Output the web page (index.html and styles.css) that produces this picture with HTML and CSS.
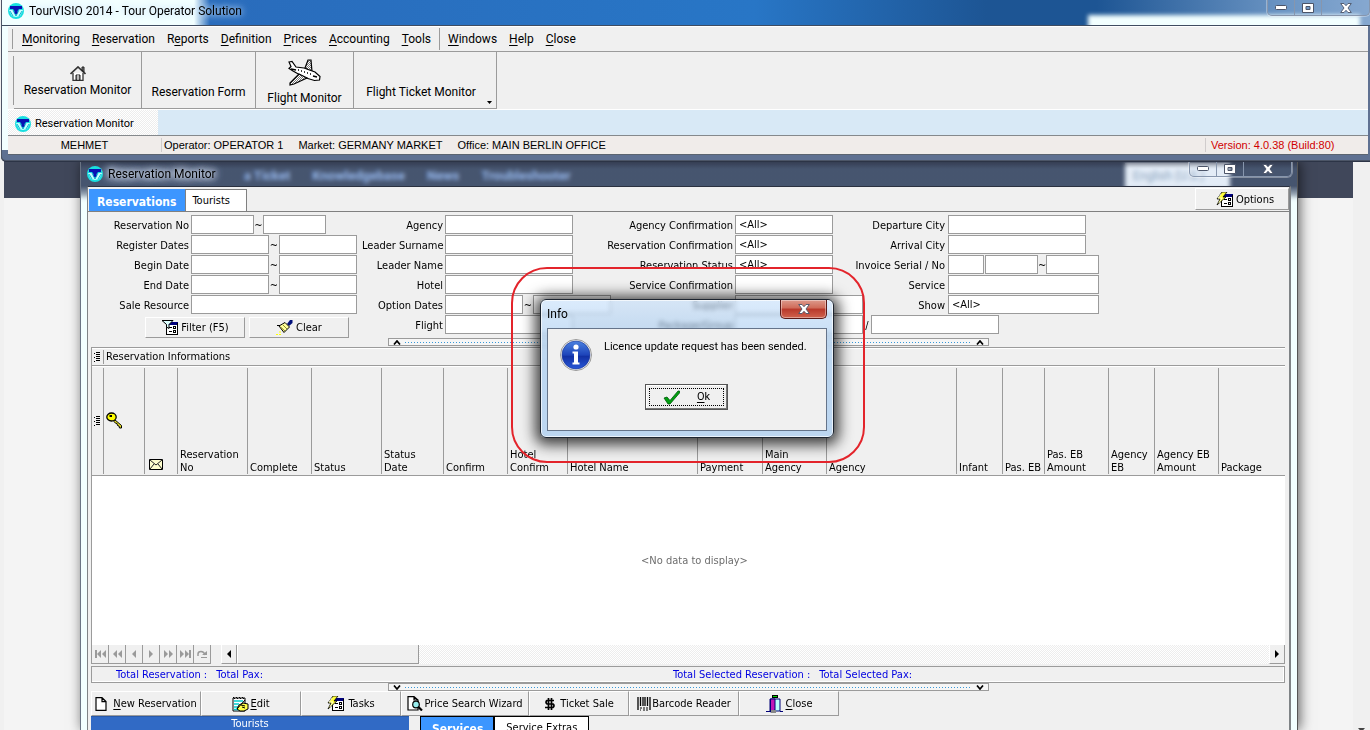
FILE: index.html
```html
<!DOCTYPE html>
<html lang="en">
<head>
<meta charset="utf-8">
<title>TourVISIO 2014 - Tour Operator Solution</title>
<link rel="stylesheet" href="styles.css">
</head>
<body>
<svg class="defs" width="0" height="0" aria-hidden="true">
  <defs>
    <symbol id="i-app" viewBox="0 0 16 16">
      <circle cx="8" cy="8" r="8" fill="#19dfe0"/>
      <path d="M1 7h4l3 6 3-6h4l-3 6-4 1-4-1z" fill="#c8ffff"/>
      <path d="M2 8l3 5M14 8l-3 5M5 7l3 6 3-6" stroke="#10b8d0" fill="none"/>
      <path d="M2 3h12v3h-3L9.500 8v2L8 11.500 6.500 10V8L5 6H2z" fill="#0a12b4"/>
    </symbol>
    <symbol id="i-form" viewBox="0 0 17 15">
      <g shape-rendering="crispEdges">
        <path d="M6 3h10v11H6z" fill="#fff" stroke="none"/>
        <path d="M5 2h12v3H5z" fill="#00007b"/>
        <path d="M5 3h1v12H5zM16 3h1v12h-1zM5 14h12v1H5zM8 7h3v1H8zM8 11h3v1H8zM12 6h3v3h-3zM12 10h3v3h-3z" fill="#000"/>
        <path d="M13 7h1v1h-1zM13 11h1v1h-1z" fill="#fff"/>
      </g>
    </symbol>
    <symbol id="i-task" viewBox="0 0 17 15">
      <use href="#i-form" width="17" height="15"/>
      <path d="M6 0h5L7 5h3L1 13l3-6H1z" fill="#ffff3c" stroke="#000" stroke-width=".8"/>
      <path d="M5 2L2 6h4L3 11" stroke="#fff" fill="none" stroke-width=".7"/>
    </symbol>
    <symbol id="i-min" viewBox="0 0 12 6"><rect x=".5" y=".5" width="11" height="4" rx="1" fill="#fff" stroke="#4b5468"/></symbol>
    <symbol id="i-max" viewBox="0 0 12 10"><path d="M.5.5h11v9H.5zM4 3.500v3h4v-3z" fill="#fff" fill-rule="evenodd" stroke="#4b5468"/></symbol>
    <symbol id="i-x" viewBox="0 0 12 10"><path d="M.7.5h3.300L6 2.700 8 .5h3.300L8 5l3.300 4.500H8L6 7.300 4 9.500H.7L4 5z" fill="#fff" stroke="#4b5468" stroke-width=".9"/></symbol>
    <symbol id="i-list" viewBox="0 0 7 10"><path d="M0 1h1M0 5h1M0 9h1M2 .5h4M2 2.500h4M2 4.500h4M2 6.500h4M2 8.500h4" stroke="#000" shape-rendering="crispEdges"/></symbol>
    <symbol id="i-up" viewBox="0 0 8 5"><path d="M1 4.500L4 1l3 3.500" fill="none" stroke="#000" stroke-width="1.700"/></symbol>
    <symbol id="i-down" viewBox="0 0 8 5"><path d="M1 .5L4 4 7 .5" fill="none" stroke="#000" stroke-width="1.700"/></symbol>
  </defs>
</svg>

<div class="desktop">
  <div class="site">
    <nav class="site-nav">
      <a href="#">a Ticket</a><a href="#">Knowledgebase</a><a href="#">News</a><a href="#">Troubleshooter</a>
      <span class="site-lang">English (U.S.)</span>
    </nav>
    <div class="site-scroll"><svg width="7" height="4" viewBox="0 0 7 4"><path d="M0 0h7L3.500 4z" fill="#444"/></svg></div>
  </div>

  <section class="child">
    <header class="child-title">
      <svg width="16" height="16"><use href="#i-app"/></svg><h2>Reservation Monitor</h2>
      <div class="caption">
        <button aria-label="Minimize"><svg width="12" height="6"><use href="#i-min"/></svg></button><button aria-label="Maximize"><svg width="12" height="10"><use href="#i-max"/></svg></button><button class="wide" aria-label="Close"><svg width="12" height="10"><use href="#i-x"/></svg></button>
      </div>
    </header>
    <div class="client">
      <div class="tabbar">
        <button class="tab active">Reservations</button><button class="tab">Tourists</button>
        <button class="flat options"><svg width="17" height="15"><use href="#i-task"/></svg>Options</button>
      </div>

      <form class="filters" onsubmit="return false">
        <div class="group g1">
          <div class="row"><label for="rno">Reservation No</label><input id="rno" class="w63"><span class="sep">~</span><input class="w63" aria-label="Reservation No to"></div>
          <div class="row"><label for="reg">Register Dates</label><input id="reg" class="w78"><span class="sep wide">~</span><input class="w78" aria-label="Register date to"></div>
          <div class="row"><label for="beg">Begin Date</label><input id="beg" class="w78"><span class="sep wide">~</span><input class="w78" aria-label="Begin date to"></div>
          <div class="row"><label for="end">End Date</label><input id="end" class="w78"><span class="sep wide">~</span><input class="w78" aria-label="End date to"></div>
          <div class="row"><label for="src">Sale Resource</label><input id="src" class="w166"></div>
          <div class="actions">
            <button class="flat"><svg width="17" height="15" viewBox="0 0 17 15"><use href="#i-form" width="17" height="15"/><path d="M1 .5h11L8 4.500v4L5.500 7V4.500z" fill="#dff" stroke="#000"/></svg>Filter (F5)</button>
            <button class="flat"><svg width="17" height="15" viewBox="0 0 17 15"><path d="M11 4l3-4h2.500v3L13 6z" fill="#00107b"/><path d="M3 6l6-3.500L13.500 7 8 12.500z" fill="#ffff9c" stroke="#000"/><path d="M4.500 7L9 11M7 5l4 4" stroke="#8a8a20" fill="none"/><path d="M1 5.500h3" stroke="#000"/><path d="M0 14.500h6M3 12h2" stroke="#ff0" stroke-dasharray="2 1"/></svg>Clear</button>
          </div>
        </div>
        <div class="group g2">
          <div class="row"><label for="agy">Agency</label><input id="agy" class="w128"></div>
          <div class="row"><label for="lsn">Leader Surname</label><input id="lsn" class="w128"></div>
          <div class="row"><label for="ln">Leader Name</label><input id="ln" class="w128"></div>
          <div class="row"><label for="htl">Hotel</label><input id="htl" class="w128"></div>
          <div class="row"><label for="opt">Option Dates</label><input id="opt" class="w78"><span class="sep wide">~</span><input class="w78" aria-label="Option date to"></div>
          <div class="row"><label for="flt">Flight</label><input id="flt" class="w128"></div>
        </div>
        <div class="group g3">
          <div class="row"><label for="ac">Agency Confirmation</label><select id="ac" class="w98"><option>&lt;All&gt;</option></select></div>
          <div class="row"><label for="rc">Reservation Confirmation</label><select id="rc" class="w98"><option>&lt;All&gt;</option></select></div>
          <div class="row"><label for="rs">Reservation Status</label><select id="rs" class="w98"><option>&lt;All&gt;</option></select></div>
          <div class="row"><label for="sc">Service Confirmation</label><input id="sc" class="w98"></div>
          <div class="row"><label for="sup">Supplier</label><input id="sup" class="w128"></div>
          <div class="row"><label for="pkg">Package/Group</label><input id="pkg" class="w128"><span class="sep tight">/</span><input class="w128" aria-label="Group"></div>
        </div>
        <div class="group g4">
          <div class="row"><label for="dc">Departure City</label><input id="dc" class="w138"></div>
          <div class="row"><label for="arc">Arrival City</label><input id="arc" class="w138"></div>
          <div class="row"><label for="inv">Invoice Serial / No</label><input id="inv" class="w36"><input class="w53 gap" aria-label="Invoice no from"><span class="sep tight">~</span><input class="w53" aria-label="Invoice no to"></div>
          <div class="row"><label for="svc">Service</label><input id="svc" class="w151"></div>
          <div class="row"><label for="shw">Show</label><select id="shw" class="w151"><option>&lt;All&gt;</option></select></div>
        </div>
      </form>

      <div class="splitter"><svg width="8" height="5"><use href="#i-up"/></svg><i></i><svg width="8" height="5"><use href="#i-up"/></svg></div>

      <div class="grid">
        <div class="band"><span class="handle"><svg width="7" height="10"><use href="#i-list"/></svg></span>Reservation Informations</div>
        <table>
          <colgroup><col class="c12"><col class="c41"><col class="c33"><col class="c70"><col class="c64"><col class="c70"><col class="c62"><col class="c64"><col class="c60"><col class="c130"><col class="c65"><col class="c64"><col class="c130"><col class="c46"><col class="c42"><col class="c64"><col class="c46"><col class="c64"><col></colgroup>
          <thead><tr>
            <th class="mid"><svg width="7" height="10"><use href="#i-list"/></svg></th>
            <th class="mid"><svg width="17" height="17" viewBox="0 0 17 17"><path d="M8.500 7.500l7 6v2.500h-2l-.5-2-1.500-.5-.5-2-1.500-.3L8 9.500z" fill="#e8e020" stroke="#000"/><ellipse cx="5.500" cy="5" rx="4.700" ry="4" fill="#ff0" stroke="#000" stroke-width="1.300"/><path d="M3.500 3h2.500v2H3.500z" fill="#000"/></svg></th>
            <th><svg width="14" height="11" viewBox="0 0 14 11"><path d="M.5.5h13v10H.5z" fill="#ffffce" stroke="#000"/><path d="M1 1l6 5 6-5M1 10l4-5M13 10L9 5" fill="none" stroke="#222"/></svg></th>
            <th>Reservation<br>No</th><th>Complete</th><th>Status</th><th>Status<br>Date</th><th>Confirm</th><th>Hotel<br>Confirm</th><th>Hotel Name</th><th>Payment</th><th>Main<br>Agency</th><th>Agency</th><th>Infant</th><th>Pas. EB</th><th>Pas. EB<br>Amount</th><th>Agency<br>EB</th><th>Agency EB<br>Amount</th><th>Package</th>
          </tr></thead>
        </table>
        <div class="empty">&lt;No data to display&gt;</div>
        <div class="navrow">
          <div class="pager">
            <button aria-label="First"><svg width="11" height="8" viewBox="0 0 11 8"><path d="M0 0h2v8H0zM6 0v8L2 4zM11 0v8L7 4z"/></svg></button><button aria-label="Previous page"><svg width="9" height="8" viewBox="0 0 9 8"><path d="M4 0v8L0 4zM9 0v8L5 4z"/></svg></button><button aria-label="Previous"><svg width="4" height="8" viewBox="0 0 4 8"><path d="M4 0v8L0 4z"/></svg></button><button aria-label="Next"><svg width="4" height="8" viewBox="0 0 4 8"><path d="M0 0v8l4-4z"/></svg></button><button aria-label="Next page"><svg width="9" height="8" viewBox="0 0 9 8"><path d="M0 0v8l4-4zM5 0v8l4-4z"/></svg></button><button aria-label="Last"><svg width="11" height="8" viewBox="0 0 11 8"><path d="M0 0v8l4-4zM5 0v8l4-4zM9 0h2v8H9z"/></svg></button><button aria-label="Refresh"><svg width="10" height="8" viewBox="0 0 10 8"><path d="M1 6V4q0-2.500 3-2.500T8 5" fill="none" stroke="#9a9a9a" stroke-width="1.500"/><path d="M5 5h5V1zM4 7h6v1H4z"/></svg></button>
          </div>
          <div class="hscroll"><button class="arrow" aria-label="Scroll left"><svg width="4" height="8" viewBox="0 0 4 8"><path d="M4 0v8L0 4z"/></svg></button><div class="thumb"></div><button class="arrow end" aria-label="Scroll right"><svg width="4" height="8" viewBox="0 0 4 8"><path d="M0 0v8l4-4z"/></svg></button></div>
        </div>
      </div>

      <div class="totals"><span>Total Reservation :</span><span>Total Pax:</span><span class="sel">Total Selected Reservation :</span><span>Total Selected Pax:</span></div>
      <div class="splitter low"><svg width="8" height="5"><use href="#i-down"/></svg><i></i><svg width="8" height="5"><use href="#i-down"/></svg></div>

      <div class="commands">
        <button class="flat b110 new"><svg width="12" height="14" viewBox="0 0 12 14"><path d="M1 .7h6L11 4.500v8.800H1zM7 .7v4h4" fill="#fff" stroke="#000" stroke-width="1.200"/></svg><span><u>N</u>ew Reservation</span></button>
        <button class="flat b100"><svg width="17" height="16" viewBox="0 0 17 16"><path d="M1 2h12v13H1z" fill="#fff" stroke="#000"/><path d="M2 5h9M2 8h5M2 11h4M2 13.500h6" stroke="#0cc" stroke-width="1.500"/><path d="M1 1l2 2M4 1l2 2M7 1l2 2M10 1l2 2" stroke="#000"/><path d="M5 13l2-4 4-2 5 1v5l-4 2H8z" fill="#ffff4a" stroke="#000"/><path d="M5 13L13 4M9 9l4 1M10 11l3 1" stroke="#000"/></svg><span><u>E</u>dit</span></button>
        <button class="flat b100"><svg width="17" height="15"><use href="#i-task"/></svg>&nbsp;Tasks</button>
        <button class="flat b128"><svg width="16" height="15" viewBox="0 0 16 15"><path d="M1 .7h6L11 4v10H1zM7 .7V4h4" fill="#fff" stroke="#000" stroke-width="1.200"/><circle cx="9" cy="8.500" r="3.300" fill="#9ee" stroke="#000" stroke-width="1.200"/><path d="M11.500 11l3.500 3.500" stroke="#000" stroke-width="2.200"/></svg>Price Search Wizard</button>
        <button class="flat b100"><svg width="12" height="12" viewBox="0 0 12 12"><path d="M10 2.500H3q-2 1.500 0 3.500h6q2 1.500 0 3.500H1M4.500 0v12M7.500 0v12" fill="none" stroke="#000" stroke-width="1.700"/></svg>&nbsp;Ticket Sale</button>
        <button class="flat b110"><svg width="14" height="14" viewBox="0 0 14 14"><path d="M1 0v13M13 0v13M3.500 0v9M6 0v9M8 0v9M10.500 0v9" stroke="#000" stroke-width="1.300"/><path d="M3 11h2M6 11h2M9 11h2M3 13h1M6 13h2M9 13h2" stroke="#000"/></svg>Barcode Reader</button>
        <button class="flat b100 exit"><svg width="17" height="18" viewBox="0 0 17 18"><path d="M6 0h6v3H6z" fill="#000"/><path d="M7 1h4v1H7z" fill="#0d0"/><path d="M4 4h10v12H4z" fill="#bff" stroke="#007"/><path d="M4.500 4H9v11l-4.500 2z" fill="#c018b8" stroke="#007"/><path d="M0 16.500h4M14 16.500h3" stroke="#007"/><path d="M5 15h5v3H5z" fill="#888"/></svg><span><u>C</u>lose</span></button>
      </div>

      <div class="lower">
        <div class="tourists">Tourists</div>
        <div class="subtabs"><button class="tab active">Services</button><button class="tab">Service Extras</button></div>
      </div>
    </div>
  </section>

  <section class="main">
    <header class="main-title">
      <svg width="16" height="16"><use href="#i-app"/></svg><h1>TourVISIO 2014 - Tour Operator Solution</h1>
      <div class="caption">
        <button aria-label="Minimize"><svg width="12" height="6"><use href="#i-min"/></svg></button><button aria-label="Maximize"><svg width="12" height="10"><use href="#i-max"/></svg></button><button class="wide" aria-label="Close"><svg width="12" height="10"><use href="#i-x"/></svg></button>
      </div>
    </header>
    <div class="main-client">
      <nav class="menu">
        <button><u>M</u>onitoring</button><button><u>R</u>eservation</button><button>R<u>e</u>ports</button><button><u>D</u>efinition</button><button><u>P</u>rices</button><button><u>A</u>ccounting</button><button><u>T</u>ools</button><i></i><button><u>W</u>indows</button><button><u>H</u>elp</button><button><u>C</u>lose</button>
      </nav>
      <div class="toolbar">
        <button class="t128"><svg width="16" height="15" viewBox="0 0 16 15"><path d="M3 7v7.500h10V7" fill="#fff" stroke="#333" stroke-width="1.300"/><path d="M.5 8L8 1l7.500 7" fill="none" stroke="#333" stroke-width="1.700"/><path d="M12 1h2v5l-2-2zM6 9h4v5H6z" fill="#777" stroke="#222"/><path d="M7.500 9h1v5h-1z" fill="#fff"/></svg><span>Reservation Monitor</span></button>
        <button class="t114 low"><span>Reservation Form</span></button>
        <button class="t98 plane"><svg width="33" height="27" viewBox="0 0 33 27"><defs><pattern id="dots" width="2" height="2" patternUnits="userSpaceOnUse"><path d="M0 0h2v2H0z" fill="#fff"/><path d="M0 0h1v1H0zM1 1h1v1H1z" fill="#777"/></pattern></defs><path d="M17 9l3-8h3l1 12z" fill="url(#dots)" stroke="#000" stroke-width="1.200"/><path d="M1 3l3-.5L8 8l8 1 11 4 5 4.500-.5 3.500-5 .5-10-3L5 12 1 9.500l2-2z" fill="#fff" stroke="#000" stroke-width="1.200"/><path d="M11 15l8 4L6 25l-4 1v-2z" fill="url(#dots)" stroke="#000" stroke-width="1.200"/><path d="M10 11h1M13 12h1M16 13h1M19 14h1M22 15h1M25 17l4 1M3 10l5 1" stroke="#000" stroke-width="1.500"/></svg><span>Flight Monitor</span></button>
        <button class="t143 low"><span>Flight Ticket Monitor</span><svg class="more" width="5" height="3" viewBox="0 0 5 3"><path d="M0 0h5L2.500 3z"/></svg></button>
      </div>
      <div class="wintabs"><button><svg width="16" height="16"><use href="#i-app"/></svg>Reservation Monitor</button></div>
      <footer class="status"><span class="user">MEHMET</span><span>Operator: OPERATOR 1</span><span>Market: GERMANY MARKET</span><span>Office: MAIN BERLIN OFFICE</span><span class="version">Version: 4.0.38 (Build:80)</span></footer>
    </div>
  </section>

  <div class="callout"></div>

  <section class="dialog" role="dialog" aria-labelledby="dlg-title">
    <header><h2 id="dlg-title">Info</h2><button class="close" aria-label="Close"><svg width="12" height="10"><use href="#i-x"/></svg></button></header>
    <div class="dialog-body">
      <div class="message">
        <svg width="32" height="32" viewBox="0 0 32 32"><defs><linearGradient id="ball" x1="0" y1="0" x2="0" y2="1"><stop offset="0" stop-color="#4b82e0"/><stop offset=".5" stop-color="#1d44ba"/><stop offset=".55" stop-color="#1231a4"/><stop offset="1" stop-color="#2a58d8"/></linearGradient></defs><circle cx="16" cy="16" r="15.500" fill="#f4f4f4" stroke="#999"/><circle cx="16" cy="16" r="14" fill="url(#ball)" stroke="#1a3494" stroke-width=".6"/><circle cx="16" cy="8" r="2.600" fill="#fff"/><path d="M12.500 12.500h5.500v11h1.500V25.500h-7V23.500H14v-9h-1.500z" fill="#fff"/></svg>
        <p>Licence update request has been sended.</p>
      </div>
      <button class="ok"><svg width="17" height="15" viewBox="0 0 17 15"><path d="M1 8l3-1 3 3.500L15 1h1.500v2L7 14H5z" fill="#00a010" stroke="#005a0a" stroke-width=".8"/></svg><span><u>O</u>k</span></button>
    </div>
  </section>
</div>
</body>
</html>
```
FILE: styles.css
```css
:root {
  --face: #f0f0f0;
  --line: #9b9b9b;
  --tahoma: "DejaVu Sans Condensed", "DejaVu Sans", sans-serif;
  --segoe: Roboto, "Noto Sans", sans-serif;
  --system: Roboto, "Liberation Sans", sans-serif;
}
* { box-sizing: border-box; }
html, body { height: 100%; }
body { margin: 0; overflow: hidden; background: #f0f0f0; color: #000; font: 11px/13px var(--tahoma); }
button, input, select { margin: 0; padding: 0; border: 0; background: none; color: inherit; font: inherit; border-radius: 0; }
button { white-space: nowrap; }
h1, h2, p { margin: 0; font: inherit; }
svg { display: block; flex: none; }
u { text-underline-offset: 2px; }
.defs { position: absolute; }
.desktop { position: relative; height: 100vh; overflow: hidden; }

/* web page lying behind the windows */
.site { position: absolute; inset: 161px 0 0 4px; padding-right: 17px; background: #f0f0f0; }
.site::after { content: ""; display: block; height: 100%; background: #f4f4f4; }
.site-nav { display: flex; align-items: center; gap: 22px; height: 37px; padding: 0 123px 7px 240px; background: #40475a; font: bold 13px/16px var(--system); }
.site-nav a { color: #9fbcec; text-decoration: none; }
.site-lang { margin-left: auto; width: 105px; height: 26px; padding: 5px 8px; background: #fff; color: #9ab; font-weight: normal; font-size: 12px; }
.site-scroll { position: absolute; right: 5px; bottom: -2px; }

/* caption buttons */
.caption { display: flex; align-self: flex-start; margin-left: auto; border: 1px solid #8796ad; border-top: 0; border-radius: 0 0 5px 5px; box-shadow: 0 0 0 1px #ffffff55; }
.caption button { display: flex; align-items: center; justify-content: center; width: 27px; height: 15px; border-right: 1px solid #8796ad; }
.caption .wide { width: 47px; border-right: 0; }

/* reservation window */
.child { position: absolute; inset: 161px 72px 0 80px; padding: 0 6px; display: flex; flex-direction: column; border-left: 1px solid #6a7484; border-right: 1px solid #555; background: linear-gradient(#1f2a4066, #6496d22e 8px, #6496d22e 25px, #f2ffff 42px); backdrop-filter: blur(2px); box-shadow: 2px 0 12px #0009; }
.child-title { display: flex; align-items: center; height: 25px; color: #000; font: 12px/16px var(--segoe); }
.child-title h2 { margin-left: 5px; text-shadow: 0 0 5px #dde6f4, 0 0 8px #dde6f4, 0 0 10px #b8c6dc, 0 0 12px #b8c6dc; }
.child-title .caption { margin-right: -1px; }
.client { flex: 1; min-height: 0; display: flex; flex-direction: column; overflow: hidden; background: var(--face); border: 2px solid #7f8386; border-top: 1px solid #2b3140; border-bottom: 0; border-left-width: 1px; }
.tabbar { display: flex; align-items: flex-end; height: 25px; padding-left: 1px; border-bottom: 1px solid #808080; }
.tab { height: 22px; padding: 0 6px; border: 1px solid #808080; border-bottom: 0; background: #fff; }
.tab.active { padding: 4px 8px 0 7px; border-color: #3c96ff; background: #3c96ff; color: #fff; font-weight: bold; font-size: 12px; }
.tabbar .tab:nth-child(2) { padding-right: 16px; }
.flat { display: flex; align-items: center; justify-content: center; gap: 3px; border: 1px solid var(--line); border-top-color: #fff; border-left-color: #fff; background: var(--face); }
.options { width: 94px; height: 22px; margin: 0 0 1px auto; padding-left: 6px; }

.filters { display: flex; padding-top: 3px; }
.group { flex: none; }
.row { display: flex; align-items: flex-start; height: 20px; line-height: 21px; }
.row label { flex: none; padding-right: 2px; text-align: right; white-space: nowrap; }
.row input, .row select { flex: none; height: 19px; border: 1px solid var(--line); background: #fff; }
.row select { appearance: none; padding-left: 3px; line-height: 17px; }
.g1 { width: 274px; } .g1 label { width: 103px; }
.g2 { width: 208px; } .g2 label { width: 83px; }
.g3 { width: 250px; } .g3 label { width: 165px; }
.g4 label { width: 128px; padding-right: 3px; }
.sep { flex: none; width: 9px; text-align: center; }
.sep.wide { width: 10px; }
.sep.tight { width: 8px; }
.w36 { width: 36px; } .w53 { width: 53px; } .w63 { width: 63px; } .w78 { width: 78px; } .w98 { width: 98px; } .w128 { width: 128px; } .w138 { width: 138px; } .w151 { width: 151px; } .w166 { width: 166px; }
.gap { margin-left: 1px; }
.actions { display: flex; gap: 4px; padding: 2px 0 0 57px; }
.actions .flat { width: 100px; height: 21px; }

.splitter { display: flex; align-items: center; gap: 4px; width: 50%; height: 8px; margin: 0 auto; padding: 0 4px; border: 1px solid var(--line); background: #f6f6f6; }
.splitter i { flex: 1; height: 1px; background: repeating-linear-gradient(90deg, #3898d8 0 1px, transparent 1px 3px); }

.grid { flex: 1; min-height: 0; display: flex; flex-direction: column; margin: 1px 4px 0 3px; border-left: 1px solid var(--line); border-top: 1px solid var(--line); background: #fff; }
.band { display: flex; align-items: center; height: 18px; border-bottom: 1px solid var(--line); background: var(--face); box-shadow: inset 0 1px #fff; }
.handle { display: flex; align-items: center; justify-content: center; width: 12px; height: 14px; margin-right: 2px; border-right: 1px solid var(--line); }
table { table-layout: fixed; width: 100%; border-spacing: 0; background: var(--face); border-top: 1px solid #fff; border-bottom: 1px solid var(--line); }
th { height: 108px; padding: 0 0 1px 2px; vertical-align: bottom; text-align: left; font-weight: normal; white-space: nowrap; background: linear-gradient(var(--line), var(--line)) right center / 1px 106px no-repeat; }
th:last-child { background: none; }
th.mid { vertical-align: middle; }
th:nth-child(3) { padding: 0 0 5px 4px; }
.c12 { width: 12px; } .c33 { width: 33px; } .c41 { width: 41px; } .c42 { width: 42px; } .c46 { width: 46px; } .c60 { width: 60px; } .c62 { width: 62px; } .c64 { width: 64px; } .c65 { width: 65px; } .c70 { width: 70px; } .c130 { width: 130px; }
.empty { flex: 1; display: flex; align-items: center; justify-content: center; padding-left: 12px; color: #6d6d6d; }
.navrow { display: flex; height: 19px; background: var(--face); }
.pager { display: flex; width: 129px; }
.pager button { display: flex; align-items: center; justify-content: center; width: 17px; border-right: 1px solid var(--line); border-bottom: 1px solid var(--line); fill: #9a9a9a; }
.hscroll { flex: 1; display: flex; background: repeating-conic-gradient(#ededed 0 25%, #fff 0 50%) 0 0 / 2px 2px; }
.arrow { display: flex; align-items: center; justify-content: center; width: 16px; border: 1px solid var(--line); border-top: 0; border-left-color: #fff; background: var(--face); }
.arrow.end { margin-left: auto; }
.thumb { width: 182px; border: 1px solid var(--line); border-top: 0; border-left-color: #fff; background: var(--face); }
.totals { display: flex; align-items: center; gap: 9px; height: 17px; margin: 2px 4px 0 3px; padding-left: 24px; border: 1px solid var(--line); color: #0000e0; box-shadow: inset -1px -1px #fff; }
.totals .sel { margin-left: 401px; }
.commands { display: flex; padding-left: 3px; }
.commands .flat { height: 25px; gap: 1px; }
.commands .new { gap: 6px; }
.commands .exit { gap: 3px; }
.b100 { width: 100px; } .b128 { width: 128px; } .b110 { width: 110px; }
.lower { display: flex; gap: 11px; height: 14px; padding-left: 3px; overflow: hidden; }
.tourists { width: 318px; border-top: 1px solid #2a5aa8; background: #316ac5; color: #fff; text-align: center; }
.subtabs { display: flex; }
.subtabs .tab { border-color: #000; padding: 0 11px; }
.subtabs .tab.active { padding: 4px 10px 0 11px; background: #3c96ff; }

/* main window */
.main { position: absolute; inset: 0 0 auto 1px; padding: 0 2px 5px 6px; border: 1px solid #4c5566; border-width: 0 0 1px 1px; background: linear-gradient(#f2ffff, #f2ffff) 0 0 / 6px 150px no-repeat, #5f7192; box-shadow: 0 1px 0 #2c3446; border-radius: 0 0 0 5px; }
.main-title { position: relative; z-index: 0; overflow: hidden; display: flex; align-items: flex-start; height: 26px; margin: 0 -2px 0 -6px; padding: 3px 0 0 6px; border-bottom: 1px solid #3f4c60;
  background: linear-gradient(90deg, #f2ffff 192px, #f2ffff00 208px), linear-gradient(90deg, #2a68b8, #2876c6 55%, #1d5594 72%, #1d5594 80%, #6d96c4 94%, #86a8d0); font: 12px/16px var(--segoe); }
.main-title::after { content: ""; position: absolute; z-index: -1; right: 10px; bottom: -6px; width: 272px; height: 16px; background: #f2ffff; filter: blur(2px); }
.main-title h1 { margin-left: 5px; text-shadow: 0 0 6px #dcebfa, 0 0 10px #b8d4f0; }
.main-title .caption { margin-top: -3px; }
.main-client { background: var(--face); border-bottom: 1px solid #5b6470; }
.menu { display: flex; align-items: center; height: 26px; padding-left: 4px; gap: 12px; border-bottom: 1px solid var(--line); border-top: 1px solid #fff; font: 12px/16px var(--segoe); }
.menu::before { content: ""; height: 20px; width: 1px; margin-right: -3px; background: var(--line); }
.menu i { width: 1px; height: 22px; margin: 0 -4px; background: var(--line); }
.toolbar { display: flex; height: 58px; padding-left: 5px; font: 12px/16px var(--segoe); border-bottom: 1px solid #fff; }
.toolbar::before { content: ""; width: 1px; margin: 4px 0; background: var(--line); }
.toolbar button { display: flex; flex-direction: column; align-items: center; justify-content: flex-end; gap: 1px; padding-bottom: 10px; border-right: 1px solid var(--line); border-bottom: 1px solid var(--line); position: relative; }
.toolbar .low { padding-bottom: 8px; }
.toolbar .plane { padding-bottom: 2px; gap: 4px; }
.toolbar .t143 { padding-right: 8px; }
.t128 { width: 128px; } .t114 { width: 114px; } .t98 { width: 98px; } .t143 { width: 143px; }
.more { position: absolute; right: 4px; bottom: 4px; }
.wintabs { display: flex; height: 26px; background: #d8e9f6; border-bottom: 1px solid #85898c; font: 11px/14px var(--system); }
.wintabs button { display: flex; align-items: center; gap: 4px; width: 150px; padding: 2px 0 0 7px; background: repeating-conic-gradient(#ededed 0 25%, #fff 0 50%) 0 0 / 2px 2px; }
.status { display: flex; align-items: center; gap: 15px; height: 18px; background: #f0ecea; font: 11px/14px "Liberation Sans", Arial, sans-serif; }
.status .user { width: 154px; margin-right: -13px; border-right: 1px solid #d0cccc; text-align: center; }
.status .version { width: 163px; margin-left: auto; padding-left: 5px; border-left: 1px solid #d0cccc; color: #d00000; }

.callout { position: absolute; left: 511px; top: 267px; width: 354px; height: 196px; border: 2px solid #e3242b; border-radius: 36px; }

/* message box */
.dialog { position: absolute; left: 540px; top: 299px; width: 294px; padding: 0 6px 6px; border: 1px solid #1d2530; border-radius: 6px; background: linear-gradient(#c4defa99, #a8ccf099 30px, #bcd6f0 60px); backdrop-filter: blur(2px); box-shadow: 0 2px 14px 5px #000b, inset 0 0 0 1px #ffffffb0; }
.dialog header { display: flex; align-items: center; justify-content: space-between; height: 28px; font: 12px/16px var(--segoe); }
.close { display: flex; align-items: center; justify-content: center; align-self: flex-start; width: 47px; height: 19px; border: 1px solid #5a1a18; border-top: 0; border-radius: 0 0 5px 5px; background: linear-gradient(#dd9a8c, #cf6a58 45%, #b8382a 50%, #d0634e); box-shadow: inset 0 0 0 1px #ffffff66; }
.dialog-body { display: flex; flex-direction: column; align-items: center; gap: 12px; padding: 10px 13px 20px 12px; border: 1px solid #65748a; background: var(--face); font: 11px/16px var(--system); }
.message { display: flex; gap: 12px; align-self: stretch; padding-bottom: 1px; }
.ok { display: flex; align-items: center; justify-content: center; gap: 17px; width: 83px; height: 26px; border: 1px solid #555; box-shadow: inset -1px -1px #777, inset 1px 1px #fff; outline: 1px dotted #000; outline-offset: -5px; }
```
